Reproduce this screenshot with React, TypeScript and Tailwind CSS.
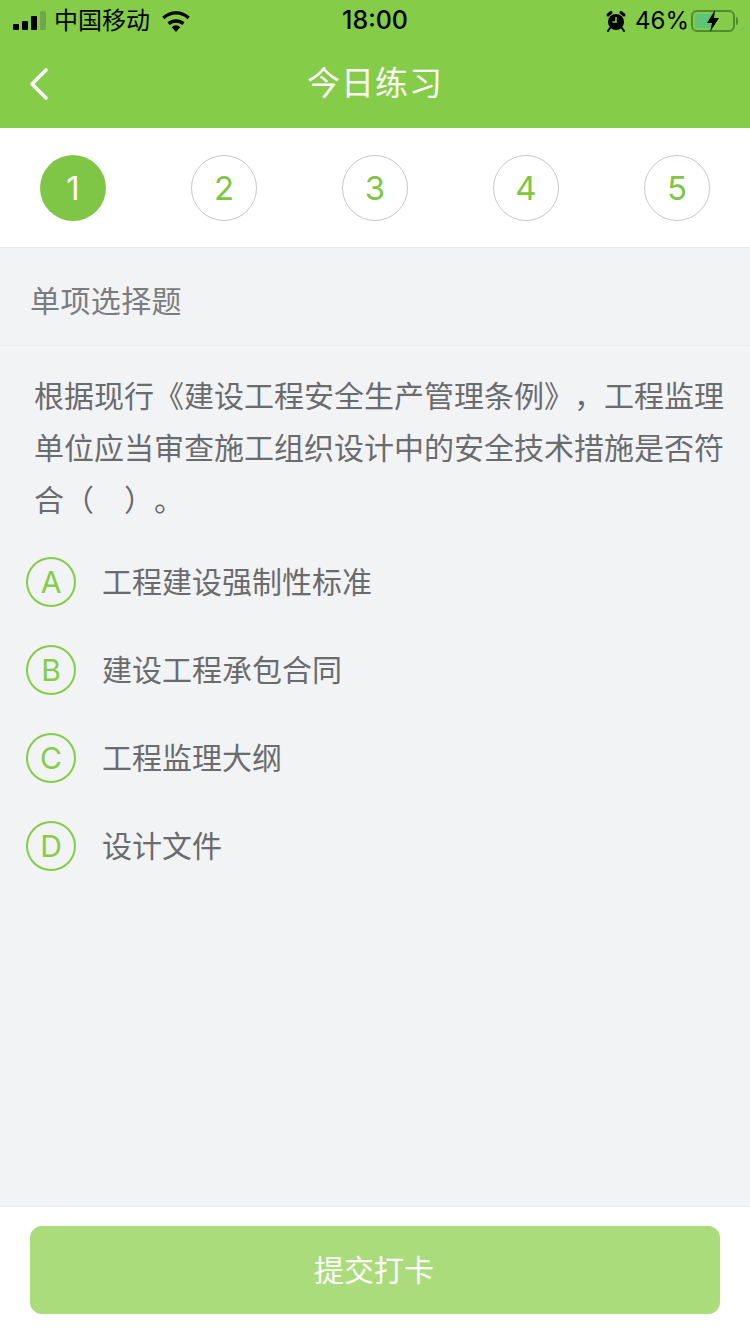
import React from 'react';

const font = "font-['Inter','Noto_Sans_CJK_SC',sans-serif]";
const steps = ['1', '2', '3', '4', '5'];
const options = [
  { key: 'A', text: '工程建设强制性标准' },
  { key: 'B', text: '建设工程承包合同' },
  { key: 'C', text: '工程监理大纲' },
  { key: 'D', text: '设计文件' },
];

const StatusBar = () => (
  <div className="relative flex h-10 items-center justify-between pl-[13px] pr-[12px] pt-[1px] text-black">
    <div className="flex items-center">
      <div className="flex items-end gap-[3px]">
        <span className="h-[6px] w-[6px] rounded-[1px] bg-black" />
        <span className="h-[9px] w-[6px] rounded-[1px] bg-black" />
        <span className="h-[14px] w-[6px] rounded-[1px] bg-black" />
        <span className="h-[19px] w-[6px] rounded-[1px] bg-[#6ea84a]" />
      </div>
      <span className="ml-[8px] text-[24px] leading-none">中国移动</span>
      <svg className="ml-[11px]" width="30" height="22" viewBox="0 0 30 22">
        <path d="M15 22 L10.6 17 A6.6 6.6 0 0 1 19.4 17 Z" fill="#000" />
        <path d="M7.6 13.8 A11 11 0 0 1 22.4 13.8" fill="none" stroke="#000" strokeWidth="3.4" />
        <path d="M2.4 8 A18 18 0 0 1 27.6 8" fill="none" stroke="#000" strokeWidth="3.4" />
      </svg>
    </div>
    <span className="absolute left-0 right-0 text-center text-[25px] font-medium leading-none">18:00</span>
    <div className="flex items-center">
      <svg width="22" height="22" viewBox="0 0 22 22">
        <circle cx="11" cy="12" r="8" fill="#000" />
        <path d="M11 7 V12 H7.5" fill="none" stroke="#85cc49" strokeWidth="1.5" />
        <path d="M3 5 L6 2.5 M19 5 L16 2.5" stroke="#000" strokeWidth="3" strokeLinecap="round" />
        <path d="M5 18 L3 21 M17 18 L19 21" stroke="#000" strokeWidth="2" strokeLinecap="round" />
      </svg>
      <span className="ml-[8px] text-[24px] leading-none">46%</span>
      <div className="relative ml-[2px] flex h-[22px] w-[44px] rounded-[6px] border-2 border-[#4f8a35] p-[2px]">
        <span className="h-full w-[18px] rounded-[2px] bg-[#5dc47a]" />
        <svg className="absolute left-[12px] top-[-3px]" width="16" height="24" viewBox="0 0 16 24">
          <path d="M10 1 L2 14 H7 L5 23 L14 9 H9 Z" fill="#000" />
        </svg>
      </div>
      <span className="ml-[1px] h-[8px] w-[2px] rounded-r-sm bg-[#4f8a35]" />
    </div>
  </div>
);

const App: React.FC = () => {
  return (
    <div className={`flex h-[1334px] w-[750px] flex-col bg-[#f2f3f5] ${font}`}>
      <div className="h-[128px] bg-[#85cc49]">
        <StatusBar />
        <div className="relative flex h-[88px] items-center justify-center pb-[2px]">
          <svg className="absolute left-[28px] top-[27px]" width="22" height="34" viewBox="0 0 22 34">
            <path d="M18 3 L4 17 L18 31" fill="none" stroke="#fff" strokeWidth="3.6" strokeLinecap="round" strokeLinejoin="round" />
          </svg>
          <span className="text-[33px] leading-none tracking-[1px] text-white">今日练习</span>
        </div>
      </div>

      <div className="flex h-[120px] items-start justify-between border-b border-[#e8e8e8] bg-white px-[40px] pt-[27px]">
        {steps.map((step, i) => (
          <div
            key={step}
            className={`flex h-[66px] w-[66px] items-center justify-center rounded-full text-[33px] leading-none ${
              i === 0 ? 'bg-[#7fc646] text-white' : 'border border-[#c8c8c8] text-[#7fc646]'
            }`}
          >
            {step}
          </div>
        ))}
      </div>

      <div className="flex h-[98px] items-center border-b border-[#ebebeb] pl-[30px] pt-[9px] text-[30px] leading-none tracking-[0.4px] text-[#7b7c7e]">
        单项选择题
      </div>

      <div className="pl-[34px] pr-[26px] pt-[24px] text-[30px] leading-[52px] text-[#6a6b6d] [text-spacing-trim:space-all]">
        根据现行《建设工程安全生产管理条例》，工程监理单位应当审查施工组织设计中的安全技术措施是否符合（　）。
      </div>

      <div className="mt-[31px] flex flex-1 flex-col gap-[38px] pl-[26px]">
        {options.map(option => (
          <div key={option.key} className="flex items-center">
            <span className="flex h-[50px] w-[50px] items-center justify-center rounded-full border-2 border-[#85cc49] text-[30px] leading-none text-[#85cc49]">
              {option.key}
            </span>
            <span className="ml-[26px] text-[30px] leading-none text-[#6a6b6d]">{option.text}</span>
          </div>
        ))}
      </div>

      <div className="h-[128px] border-t border-[#e8e8e8] bg-white px-[30px] pt-[19px]">
        <div className="flex h-[88px] items-center justify-center rounded-[12px] bg-[#aadc7b] pr-[2px] text-[30px] leading-none text-white">
          提交打卡
        </div>
      </div>
    </div>
  );
};

export default App;
